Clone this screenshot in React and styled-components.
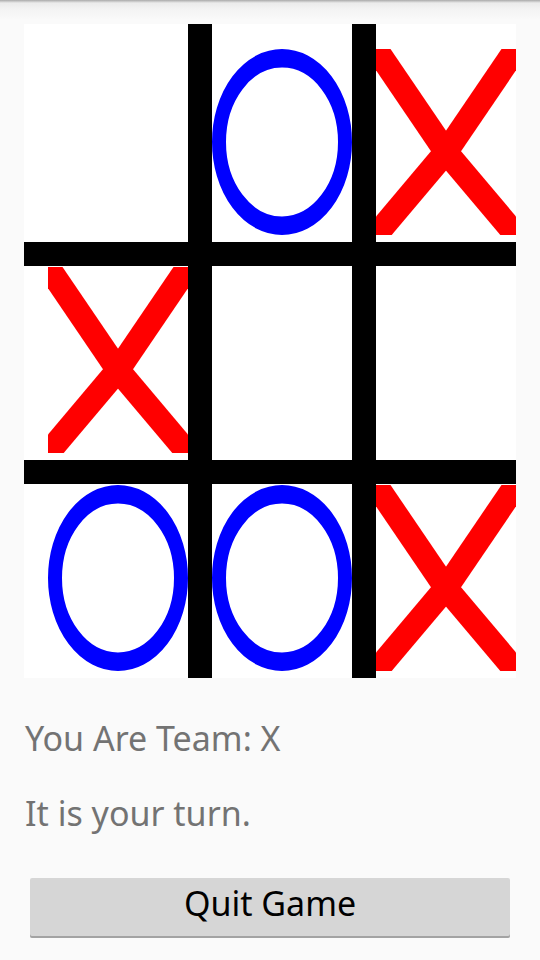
import React from "react";
import styled, { createGlobalStyle } from "styled-components";

const Global = createGlobalStyle`
  html, body { margin: 0; padding: 0; }
  body { background: #fafafa; font-family: "Noto Sans", "Open Sans", sans-serif; }
`;

const Page = styled.div`
  width: 540px;
  height: 960px;
  box-sizing: border-box;
  padding: 24px 24px 0;
  background: linear-gradient(to bottom, #a9a9a9 0px, #d6d6d6 2px, #ebebeb 3px, #f4f4f4 10px, #fafafa 20px) no-repeat;
  display: flex;
  flex-direction: column;
`;

const Board = styled.div`
  display: grid;
  grid-template-columns: repeat(3, 164px);
  grid-template-rows: repeat(3, 218px);
  background: #ffffff;
  width: 492px;
`;

const line = "linear-gradient(#000, #000)";

const Cell = styled.div`
  box-sizing: border-box;
  padding: 25px 0 0 24px;
  background-color: #fff;
  background-image: ${(p) =>
    [p.$col > 0 ? line : null, p.$row > 0 ? line : null].filter(Boolean).join(", ") || "none"};
  background-size: ${(p) =>
    [p.$col > 0 ? "24px 100%" : null, p.$row > 0 ? "100% 24px" : null].filter(Boolean).join(", ") || "auto"};
  background-position: 0 0;
  background-repeat: no-repeat;
`;

const Mark = styled.svg`
  display: block;
  width: 140px;
  height: 186px;
`;

const XMark = () => (
  <Mark viewBox="0 0 140 186" preserveAspectRatio="none">
    <g stroke="#ff0000" strokeWidth="24" strokeLinecap="butt" fill="none">
      <line x1="-14" y1="-20.6" x2="70" y2="103" />
      <line x1="154" y1="-20.6" x2="70" y2="103" />
      <line x1="-14" y1="202.6" x2="70" y2="103" />
      <line x1="154" y1="202.6" x2="70" y2="103" />
    </g>
  </Mark>
);

const OMark = () => (
  <Mark viewBox="0 0 100 100" preserveAspectRatio="none">
    <circle cx="50" cy="50" r="45" fill="none" stroke="#0000ff" strokeWidth="10" />
  </Mark>
);

const Info = styled.p`
  margin: ${(p) => p.$top}px 1px 0;
  font-size: 34px;
  line-height: 40px;
  color: #737373;
`;

const QuitButton = styled.button`
  margin: 45px 6px 0;
  height: 60px;
  border: none;
  border-radius: 2px;
  background: #d6d6d6;
  box-shadow: inset 0 -2px 0 #a3a3a3;
  font-family: "Noto Sans", "Open Sans", sans-serif;
  font-size: 34px;
  color: #000;
  padding: 0 0 10px;
`;

const board = [
  ["", "O", "X"],
  ["X", "", ""],
  ["O", "O", "X"],
];

export default function App() {
  return (
    <>
      <Global />
      <Page>
        <Board>
          {board.map((row, r) =>
            row.map((v, c) => (
              <Cell key={`${r}-${c}`} $row={r} $col={c}>
                {v === "X" && <XMark />}
                {v === "O" && <OMark />}
              </Cell>
            ))
          )}
        </Board>
        <Info $top={40}>You Are Team: X</Info>
        <Info $top={35}>It is your turn.</Info>
        <QuitButton>Quit Game</QuitButton>
      </Page>
    </>
  );
}
